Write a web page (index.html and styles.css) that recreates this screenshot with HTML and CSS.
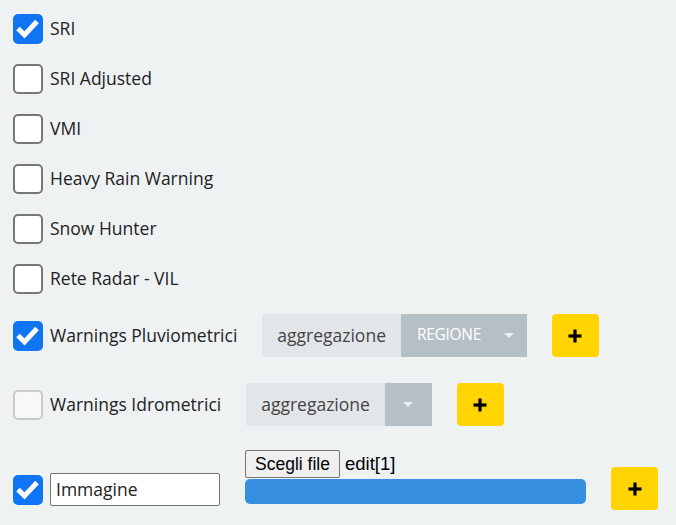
FILE: index.html
```html
<!DOCTYPE html>
<html lang="it">
<head>
<meta charset="utf-8">
<title>Layers</title>
<link rel="stylesheet" href="styles.css">
</head>
<body>
<div class="panel">
  <div class="row">
    <span class="cb checked"><svg viewBox="0 0 30 30" width="30" height="30"><polyline points="5,14.5 11.5,21 24,7.5" fill="none" stroke="#fff" stroke-width="5"/></svg></span>
    <span class="lbl">SRI</span>
  </div>
  <div class="row">
    <span class="cb"></span>
    <span class="lbl">SRI Adjusted</span>
  </div>
  <div class="row">
    <span class="cb"></span>
    <span class="lbl">VMI</span>
  </div>
  <div class="row">
    <span class="cb"></span>
    <span class="lbl">Heavy Rain Warning</span>
  </div>
  <div class="row">
    <span class="cb"></span>
    <span class="lbl">Snow Hunter</span>
  </div>
  <div class="row">
    <span class="cb"></span>
    <span class="lbl">Rete Radar - VIL</span>
  </div>

  <div class="row grp grp-pluv">
    <span class="cb checked"><svg viewBox="0 0 30 30" width="30" height="30"><polyline points="5,14.5 11.5,21 24,7.5" fill="none" stroke="#fff" stroke-width="5"/></svg></span>
    <span class="lbl">Warnings Pluviometrici</span>
    <div class="agg">
      <span class="agg-label">aggregazione</span>
      <span class="agg-select wide"><span class="agg-value">REGIONE</span><span class="caret"></span></span>
    </div>
    <button class="add"><svg viewBox="0 0 16 16" width="16" height="16"><rect x="1.5" y="6.4" width="13" height="3.2" fill="#000"/><rect x="6.4" y="1.5" width="3.2" height="13" fill="#000"/></svg></button>
  </div>

  <div class="row grp grp-idro">
    <span class="cb disabled"></span>
    <span class="lbl">Warnings Idrometrici</span>
    <div class="agg">
      <span class="agg-label">aggregazione</span>
      <span class="agg-select narrow"><span class="caret"></span></span>
    </div>
    <button class="add"><svg viewBox="0 0 16 16" width="16" height="16"><rect x="1.5" y="6.4" width="13" height="3.2" fill="#000"/><rect x="6.4" y="1.5" width="3.2" height="13" fill="#000"/></svg></button>
  </div>

  <div class="row last">
    <span class="cb checked"><svg viewBox="0 0 30 30" width="30" height="30"><polyline points="5,14.5 11.5,21 24,7.5" fill="none" stroke="#fff" stroke-width="5"/></svg></span>
    <input class="name" type="text" value="Immagine">
    <div class="file">
      <div class="file-line">
        <span class="file-btn">Scegli file</span>
        <span class="file-name">edit[1]</span>
      </div>
      <div class="bar"></div>
    </div>
    <button class="add"><svg viewBox="0 0 16 16" width="16" height="16"><rect x="1.5" y="6.4" width="13" height="3.2" fill="#000"/><rect x="6.4" y="1.5" width="3.2" height="13" fill="#000"/></svg></button>
  </div>
</div>
</body>
</html>
```
FILE: styles.css
```css
html, body {
  margin: 0;
  padding: 0;
  background: #eff2f3;
}

body {
  font-family: "Open Sans", "Liberation Sans", sans-serif;
  color: #222;
  width: 676px;
  height: 525px;
  overflow: hidden;
}

.panel {
  display: flex;
  flex-direction: column;
  padding: 4px 0 0 13px;
}

.row {
  display: flex;
  align-items: center;
  height: 50px;
  gap: 7px;
}

.cb {
  box-sizing: border-box;
  width: 30px;
  height: 30px;
  flex: none;
  border: 2px solid #777;
  border-radius: 5px;
  background: #fff;
  display: block;
}

.cb svg {
  display: block;
  margin: -2px;
}

.cb.checked {
  background: #0f75f5;
  border-color: #0f75f5;
}

.cb.disabled {
  border-color: #c9cbcd;
  background: #f8f8f8;
}

.lbl {
  font-size: 17.5px;
  line-height: 24px;
  white-space: nowrap;
  margin-top: -2px;
}

.grp {
  height: 43px;
  gap: 0;
}

.grp .lbl {
  margin-left: 7px;
}

.grp-pluv {
  margin-top: 10px;
}

.grp-idro {
  margin-top: 26px;
}

.agg {
  display: flex;
  height: 43px;
  margin-left: 25px;
}

.agg-label {
  display: flex;
  align-items: center;
  padding: 0 15px 2px 15px;
  background: #e3e6e9;
  color: #444;
  font-size: 17.5px;
  border-radius: 3px 0 0 3px;
}

.agg-select {
  display: flex;
  align-items: center;
  background: #b5bfc6;
  color: #fff;
  font-size: 15.5px;
}

.agg-select.wide {
  width: 126px;
  padding-left: 16px;
  box-sizing: border-box;
}

.agg-select.narrow {
  width: 47px;
  justify-content: center;
}

.agg-value {
  width: 87px;
  letter-spacing: -0.3px;
  margin-top: -4px;
}

.caret {
  width: 0;
  height: 0;
  border-left: 5px solid transparent;
  border-right: 5px solid transparent;
  border-top: 5px solid #e9edf0;
}

.add {
  width: 47px;
  height: 43px;
  margin-left: 25px;
  padding: 0;
  border: none;
  border-radius: 4px;
  background: #ffd400;
  display: flex;
  align-items: center;
  justify-content: center;
  flex: none;
}

.add svg {
  display: block;
}

.last {
  margin-top: 24px;
  height: 60px;
  align-items: flex-end;
  gap: 0;
}

.last .cb {
  margin-bottom: 5px;
}

.name {
  box-sizing: border-box;
  width: 170px;
  height: 33px;
  margin: 0 0 4px 7px;
  padding: 0 5px 2px;
  border: 1px solid #767676;
  border-radius: 2px;
  background: #fff;
  font-family: "Open Sans", "Liberation Sans", sans-serif;
  font-size: 17.5px;
  color: #222;
  outline: none;
}

.file {
  display: flex;
  flex-direction: column;
  width: 341px;
  margin-left: 25px;
  margin-bottom: 6px;
}

.file-line {
  display: flex;
  align-items: center;
  gap: 5px;
  height: 28px;
  margin-bottom: 1px;
}

.file-btn {
  box-sizing: border-box;
  height: 28px;
  width: 95px;
  display: flex;
  align-items: center;
  justify-content: center;
  background: #efefef;
  border: 1px solid #767676;
  border-radius: 2px;
  font-family: "Liberation Sans", Arial, sans-serif;
  font-size: 17.5px;
  color: #000;
}

.file-name {
  font-family: "Liberation Sans", Arial, sans-serif;
  font-size: 18.5px;
  color: #000;
}

.bar {
  height: 25px;
  background: #368fe0;
  border-radius: 5px;
}
```
